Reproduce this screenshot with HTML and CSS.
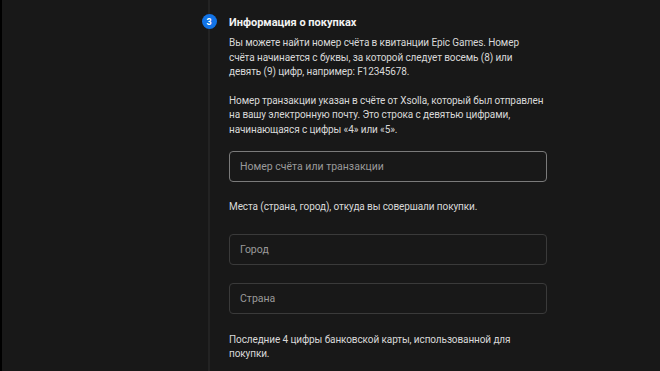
FILE: index.html
```html
<!DOCTYPE html>
<html lang="ru">
<head>
<meta charset="utf-8">
<link rel="stylesheet" href="styles.css">
</head>
<body>
<div class="page">
  <div class="step">
    <div class="rail">
      <div class="rail-line rail-top"></div>
      <div class="badge">3</div>
      <div class="rail-line rail-rest"></div>
    </div>
    <div class="content">
      <h2 class="title">Информация о покупках</h2>
      <p class="text">Вы можете найти номер счёта в квитанции Epic Games. Номер счёта начинается с буквы, за которой следует восемь (8) или девять (9) цифр, например: F12345678.</p>
      <p class="text text-wide">Номер транзакции указан в счёте от Xsolla, который был отправлен на вашу электронную почту. Это строка с девятью цифрами, начинающаяся с цифры «4» или «5».</p>
      <div class="field field-active">Номер счёта или транзакции</div>
      <p class="text text-gap">Места (страна, город), откуда вы совершали покупки.</p>
      <div class="field">Город</div>
      <div class="field">Страна</div>
      <p class="text text-gap">Последние 4 цифры банковской карты, использованной для покупки.</p>
    </div>
  </div>
</div>
</body>
</html>
```

FILE: styles.css
```css
html, body {
  margin: 0;
  padding: 0;
  height: 100%;
}
body {
  background: #000;
  font-family: Roboto, "Noto Sans", "Liberation Sans", sans-serif;
  overflow: hidden;
}
.page {
  margin-left: 2px;
  height: 100%;
  background: #181818;
  padding-left: 187px;
}
.step {
  display: flex;
  height: 100%;
}
.rail {
  width: 40px;
  display: flex;
  flex-direction: column;
  align-items: center;
  flex: none;
}
.rail-line {
  width: 2px;
  background: #232323;
}
.rail-top {
  height: 14px;
}
.rail-rest {
  flex: 1;
}
.badge {
  width: 15px;
  height: 15px;
  border-radius: 50%;
  background: #1273e6;
  color: #fff;
  font-size: 9px;
  font-weight: 700;
  display: flex;
  align-items: center;
  justify-content: center;
  flex: none;
}
.content {
  width: 318px;
  padding-top: 15px;
}
.title {
  margin: 0 0 6px;
  font-size: 11px;
  line-height: 15px;
  font-weight: 700;
  color: #f2f2f2;
}
.text {
  max-width: 312px;
  margin: 0 0 14px;
  font-size: 10px;
  letter-spacing: -0.1px;
  line-height: 14.5px;
  color: #d8d8d8;
}
.text-wide {
  max-width: 320px;
}
.text-gap {
  margin-top: 19px;
  margin-bottom: 19px;
}
.field {
  box-sizing: border-box;
  height: 31px;
  border: 1px solid #3a3a3a;
  border-radius: 4px;
  padding: 0 10px;
  display: flex;
  align-items: center;
  font-size: 10.5px;
  color: #9a9a9a;
  margin-bottom: 18px;
}
.field-active {
  border-color: #7a7a7a;
  margin-top: 14px;
}
.field-active + .text-gap {
  margin-top: 2px;
}
```
